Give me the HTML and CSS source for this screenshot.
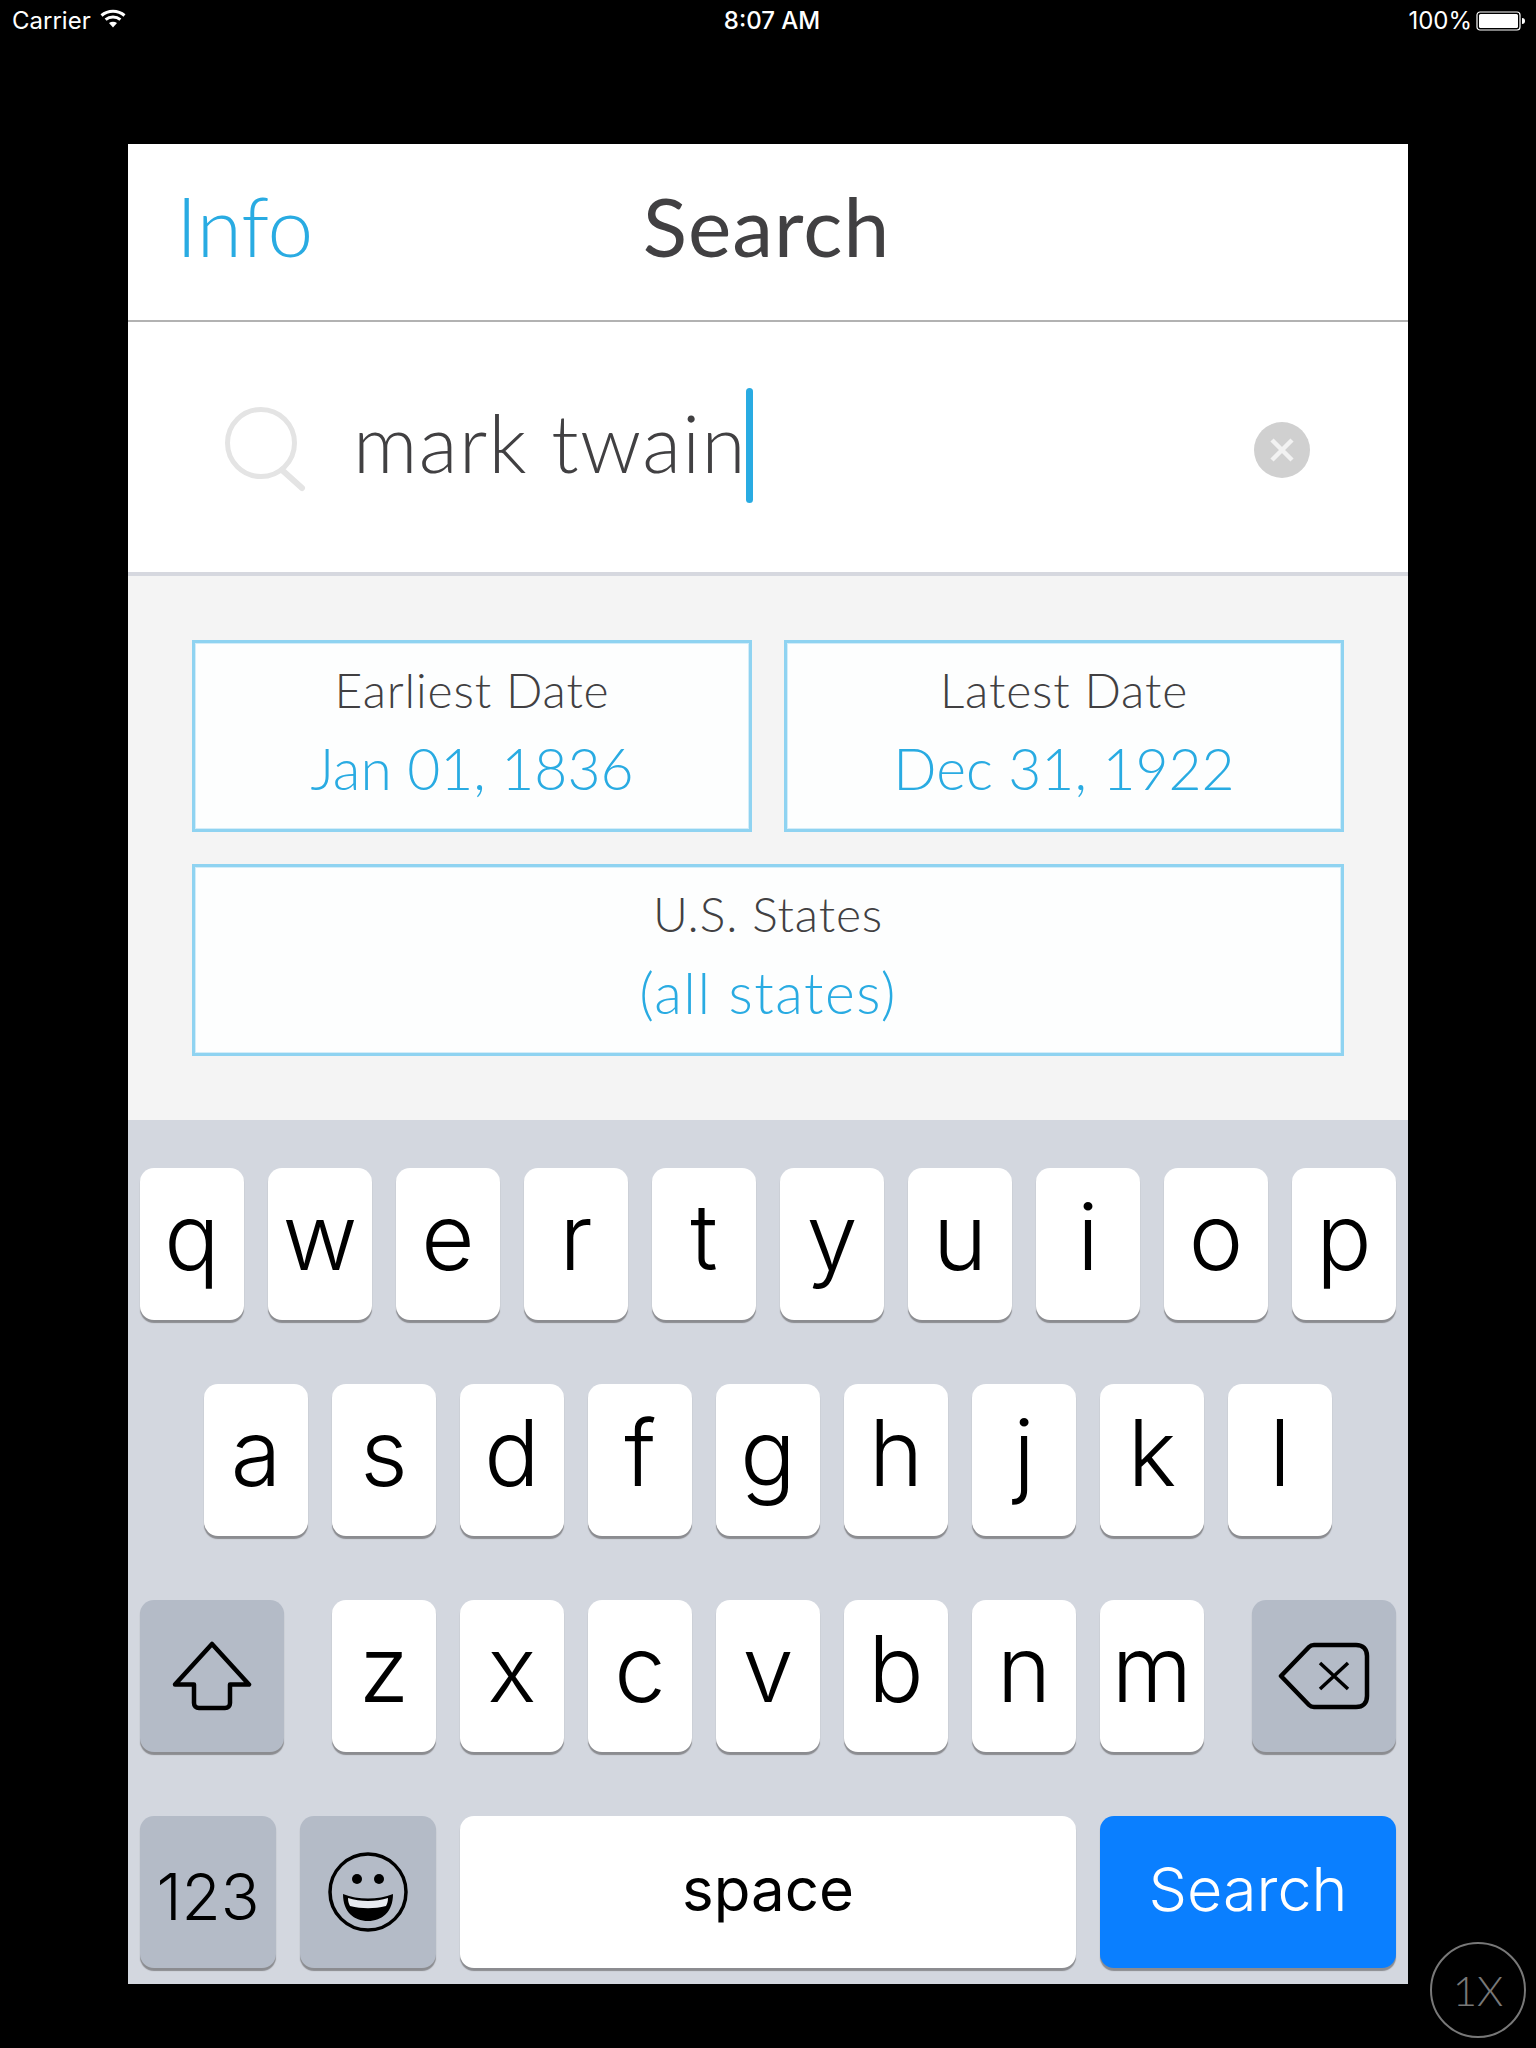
FILE: index.html
```html
<!DOCTYPE html>
<html lang="en">
<head>
<meta charset="utf-8">
<title>Search</title>
<link rel="stylesheet" href="styles.css">
</head>
<body>
<div class="status">
  <div class="status-left"><span>Carrier</span>
    <svg class="wifi" viewBox="0 0 26 19"><path d="M1.5 6.5C8 .8 18 .8 24.5 6.5" fill="none" stroke="#fff" stroke-width="3"/><path d="M5.6 10.6C9.8 7.1 16.2 7.1 20.4 10.6" fill="none" stroke="#fff" stroke-width="3"/><path d="M9 14L13 18.500l4-4.500C14.600 12.200 11.400 12.200 9 14Z" fill="#fff"/></svg>
  </div>
  <div class="status-time">8:07 AM</div>
  <div class="status-right"><span>100%</span>
    <svg class="battery" viewBox="0 0 50 20"><rect x="1" y="1" width="43" height="18" rx="3" fill="none" stroke="#fff" stroke-width="1.2"/><rect x="3" y="3" width="39" height="14" rx="1.5" fill="#fff"/><path d="M46 7c2 0 3 1 3 3s-1 3-3 3Z" fill="#fff"/></svg>
  </div>
</div>
<main class="app">
  <header class="nav">
    <span class="nav-link">Info</span>
    <span class="nav-title">Search</span>
    <span></span>
  </header>
  <section class="searchbar">
    <svg class="search-icon" viewBox="0 0 84 86"><ellipse cx="37" cy="37" rx="33.500" ry="33.500" fill="none" stroke="#e4e4e4" stroke-width="5"/><path d="M58 64L78 82" fill="none" stroke="#e4e4e4" stroke-width="6" stroke-linecap="round"/></svg>
    <div class="query">mark twain</div><div class="caret"></div>
    <svg class="clear" viewBox="0 0 56 56"><circle cx="28" cy="28" r="28" fill="#d0d0d0"/><path d="M18 18L38 38M38 18L18 38" stroke="#f2f2f2" stroke-width="4.500"/></svg>
  </section>
  <section class="filters">
    <div class="filter"><div class="filter-label">Earliest Date</div><div class="filter-value">Jan 01, 1836</div></div>
    <div class="filter"><div class="filter-label">Latest Date</div><div class="filter-value">Dec 31, 1922</div></div>
    <div class="filter filter-wide"><div class="filter-label">U.S. States</div><div class="filter-value">(all states)</div></div>
  </section>
  <section class="keyboard">
    <div class="row">
      <div class="key">q</div><div class="key">w</div><div class="key">e</div><div class="key">r</div><div class="key">t</div><div class="key">y</div><div class="key">u</div><div class="key">i</div><div class="key">o</div><div class="key">p</div>
    </div>
    <div class="row">
      <div class="key">a</div><div class="key">s</div><div class="key">d</div><div class="key">f</div><div class="key">g</div><div class="key">h</div><div class="key">j</div><div class="key">k</div><div class="key">l</div>
    </div>
    <div class="row">
      <div class="key key-mod key-shift"><svg class="shift-icon" viewBox="0 0 82 70"><path d="M41 3L78 43.500H59V62C59 65 57 67 54 67H28C25 67 23 65 23 62V43.500H4Z" fill="none" stroke="#000" stroke-width="4.500" stroke-linejoin="round"/></svg></div>
      <div class="key">z</div><div class="key">x</div><div class="key">c</div><div class="key">v</div><div class="key">b</div><div class="key">n</div><div class="key">m</div>
      <div class="key key-mod key-delete"><svg class="delete-icon" viewBox="0 0 92 68"><path d="M3 34L31 5C32.500 3.500 34 3 36 3H78C85 3 89 7 89 14V54C89 61 85 65 78 65H36C34 65 32.500 64.500 31 63Z" fill="none" stroke="#000" stroke-width="4.500" stroke-linejoin="round"/><path d="M42 21L70 47M70 21L42 47" stroke="#000" stroke-width="3.500"/></svg></div>
    </div>
    <div class="row">
      <div class="key key-mod key-num">123</div>
      <div class="key key-mod key-emoji"><svg class="emoji-icon" viewBox="0 0 80 80"><circle cx="40" cy="40" r="38" fill="none" stroke="#000" stroke-width="3.500"/><circle cx="29" cy="27" r="5" fill="#000"/><circle cx="51" cy="27" r="5" fill="#000"/><path d="M15 42C30 48 50 48 65 42C65 60 54 69 40 69C26 69 15 60 15 42Z" fill="#000"/><path d="M20 46C32 50 48 50 60 46C60 50 59 52 58 54C46 57 34 57 22 54C21 52 20 50 20 46Z" fill="#e8ebf0"/></svg></div>
      <div class="key key-space">space</div>
      <div class="key key-go">Search</div>
    </div>
  </section>
</main>
<div class="scale-badge">1X</div>
</body>
</html>
```

FILE: styles.css
```css
* { box-sizing: border-box; }
html, body { margin: 0; background: #000; }
body { position: relative; width: 1536px; height: 2048px; overflow: hidden; font-family: "Lato", "Liberation Sans", sans-serif; }

.status { height: 40px; display: grid; grid-template-columns: 1fr auto 1fr; align-items: center; padding: 1px 10px 0 12px; color: #fff; font: 24px/39px "Inter", "Liberation Sans", sans-serif; }
.status-left { display: flex; align-items: center; gap: 9px; }
.status-time { font-weight: 500; margin-left: 6px; }
.status-right { display: flex; align-items: center; justify-content: flex-end; gap: 4px; }
.wifi { width: 26px; height: 19px; margin-top: -4px; }
.battery { width: 50px; height: 20px; }

.app { width: 1280px; height: 1840px; margin: 104px 0 0 128px; background: #fff; display: flex; flex-direction: column; }

.nav { height: 178px; flex: none; display: grid; grid-template-columns: 1fr auto 1fr; align-items: center; padding: 0 48px 14px; border-bottom: 2px solid #b2b2b2; font-size: 82px; line-height: 1; }
.nav-link { color: #29abe2; font-weight: 300; }
.nav-title { color: #414042; font-weight: 400; letter-spacing: 1px; margin-left: -3px; }

.searchbar { height: 254px; flex: none; display: flex; align-items: center; padding-left: 96px; border-bottom: 4px solid #d6d8df; color: #414042; }
.search-icon { width: 84px; height: 86px; margin-top: 4px; flex: none; }
.query { margin-left: 45px; font-size: 80px; font-weight: 300; letter-spacing: 1.4px; line-height: 1; margin-top: -10px; }
.caret { width: 7px; height: 115px; margin-left: -1px; border-radius: 4px; background: #29abe2; margin-top: -4px; }
.clear { width: 56px; height: 56px; margin-left: auto; margin-right: 98px; margin-top: 6px; }

.filters { height: 544px; flex: none; background: #f4f4f4; padding: 64px; display: grid; grid-template-columns: 1fr 1fr; grid-template-rows: 192px 192px; gap: 32px; }
.filter { border: 3px solid #8fd3f1; box-shadow: inset 0 0 0 1px #d3edf9; background: #fdfefe; display: flex; flex-direction: column; align-items: center; padding-top: 21px; }
.filter-wide { grid-column: 1 / 3; }
.filter-wide .filter-value { letter-spacing: 1.500px; }
.filter-label { color: #414042; font-size: 48px; font-weight: 300; letter-spacing: .85px; line-height: 52px; }
.filter-value { color: #29abe2; font-size: 57px; font-weight: 300; line-height: 64px; margin-top: 20px; }

.keyboard { flex: 1; background: #d3d7df; padding-top: 48px; display: flex; flex-direction: column; gap: 64px; }
.row { display: flex; justify-content: center; gap: 24px; }
.key { width: 104px; height: 152px; flex: none; border-radius: 14px; background: #fff; box-shadow: 0 3px 1px #8b8c90; display: flex; align-items: center; justify-content: center; color: #000; font: 300 92px/1 "Inter", "Liberation Sans", sans-serif; padding-bottom: 14px; }
.key-mod { background: #b4bbc7; padding: 0; }
.key-shift { width: 144px; margin-right: 24px; }
.key-delete { width: 144px; margin-left: 24px; }
.key-num { width: 136px; font-size: 64px; padding-top: 10px; }
.key-emoji { width: 136px; }
.key-space { width: 616px; font-size: 60px; font-weight: 400; padding-bottom: 6px; }
.key-go { width: 296px; background: #0a7fff; color: #fff; font-size: 61px; padding-bottom: 6px; }
.shift-icon { width: 82px; height: 70px; }
.delete-icon { width: 92px; height: 68px; }
.emoji-icon { width: 80px; height: 80px; }

.scale-badge { position: absolute; left: 1430px; top: 1942px; width: 96px; height: 96px; border: 2px solid #787878; border-radius: 50%; display: flex; align-items: center; justify-content: center; color: #787878; font-size: 42px; font-weight: 300; }
```
